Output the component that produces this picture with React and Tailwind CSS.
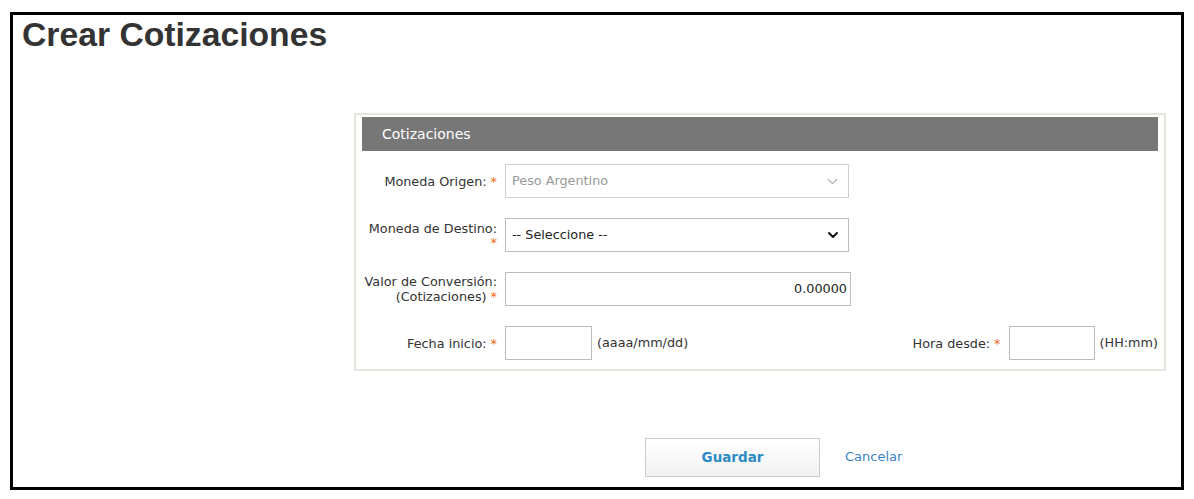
import { ChevronDown } from 'lucide-react';

const body = { fontFamily: '"DejaVu Sans", Verdana, sans-serif' };

function Req() {
  return <span className="text-[#f26a1b] ml-1">*</span>;
}

function Label({ children, className = '' }) {
  return (
    <div className={`w-[135px] shrink-0 text-right text-[12.8px] leading-[15px] text-[#333] ${className}`}>
      {children}
    </div>
  );
}

export default function App() {
  return (
    <div className="bg-white min-h-[499px] pt-[12px] pl-[10px]" style={body}>
      <div className="w-[1174px] h-[478px] border-[3px] border-black flex flex-col">
        <h1
          className="pl-[9px] text-[33.7px] leading-[39px] font-bold text-[#333]"
          style={{ fontFamily: '"Liberation Sans", Arial, sans-serif' }}
        >
          Crear Cotizaciones
        </h1>

        {/* Panel */}
        <div className="ml-[341px] mt-[59px] w-[812px] border-2 border-[#e6e6de] px-[6px] pt-[2px] pb-[9px]">
          <div className="h-[34px] bg-[#777] flex items-center pl-[20px] text-white text-[14px]">
            Cotizaciones
          </div>

          <div className="flex flex-col gap-[20px] mt-[13px]">
            {/* Moneda Origen */}
            <div className="flex items-center gap-[8px]">
              <Label>Moneda Origen:<Req /></Label>
              <div className="w-[344px] h-[34px] border border-[#d0d0d0] flex items-center justify-between pl-[6px] pr-[7px] text-[12.8px] text-[#999]">
                <span>Peso Argentino</span>
                <ChevronDown size={17} strokeWidth={1.6} className="text-[#a8a8a8]" />
              </div>
            </div>

            {/* Moneda Destino */}
            <div className="flex items-center gap-[8px]">
              <Label>
                <div>Moneda de Destino:</div>
                <div className="-mt-[1px]"><Req /></div>
              </Label>
              <div className="w-[344px] h-[34px] border border-[#bdbdbd] flex items-center justify-between pl-[6px] pr-[7px] text-[12.8px] text-[#222]">
                <span>-- Seleccione --</span>
                <ChevronDown size={16} strokeWidth={3} className="text-[#111]" />
              </div>
            </div>

            {/* Valor */}
            <div className="flex items-center gap-[8px]">
              <Label>
                <div>Valor de Conversión:</div>
                <div>(Cotizaciones)<Req /></div>
              </Label>
              <div className="w-[346px] h-[34px] border border-[#bdbdbd] flex items-center justify-end pr-[3px] text-[12.8px] text-[#222]">
                0.00000
              </div>
            </div>

            {/* Fechas */}
            <div className="flex items-center justify-between">
              <div className="flex items-center">
                <Label>Fecha inicio:<Req /></Label>
                <div className="ml-[8px] w-[87px] h-[34px] border border-[#bdbdbd]" />
                <span className="ml-[5px] text-[12.8px] text-[#333]">(aaaa/mm/dd)</span>
              </div>
              <div className="flex items-center">
                <Label>Hora desde:<Req /></Label>
                <div className="ml-[8px] w-[86px] h-[34px] border border-[#bdbdbd]" />
                <span className="ml-[5px] text-[12.8px] text-[#333]">(HH:mm)</span>
              </div>
            </div>
          </div>
        </div>

        {/* Actions */}
        <div className="flex items-center ml-[632px] mt-[67px]">
          <button className="w-[175px] h-[39px] border border-[#cbcbcb] bg-gradient-to-b from-white to-[#f2f2f2] text-[#2d8ac4] font-bold text-[13.5px]">
            Guardar
          </button>
          <a className="ml-[25px] text-[#3d82c4] text-[13px] -mt-[2px]">Cancelar</a>
        </div>
      </div>
    </div>
  );
}
